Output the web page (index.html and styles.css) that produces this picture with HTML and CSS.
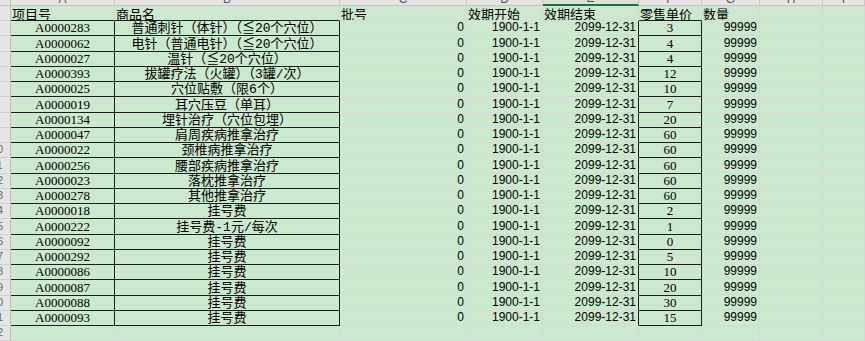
FILE: index.html
```html
<!DOCTYPE html>
<html lang="zh-CN">
<head>
<meta charset="utf-8">
<title>Sheet</title>
<link rel="stylesheet" href="styles.css">
</head>
<body>
<div class="sheet">
  <div class="row colhead">
    <div class="corner"></div><div><span>A</span></div><div><span>B</span></div><div><span>C</span></div><div><span>D</span></div><div class="sel"><span>E</span></div><div><span>F</span></div><div><span>G</span></div><div><span>H</span></div><div><span>I</span></div>
  </div>
  <div class="row hdr">
    <div class="rh"><span>1</span></div><div class="k-b">项目号</div><div class="k-b">商品名</div><div>批号</div><div>效期开始</div><div>效期结束</div><div class="k-b">零售单价</div><div>数量</div><div></div><div></div>
  </div>
  <div class="row"><div class="rh"><span>2</span></div><div class="code k-r k-b">A0000283</div><div class="zh k-r k-b">普通刺针（体针）（≦20个穴位）</div><div class="n">0</div><div class="n">1900-1-1</div><div class="n k-r">2099-12-31</div><div class="code k-r k-b">3</div><div class="n">99999</div><div></div><div></div></div>
  <div class="row"><div class="rh"><span>3</span></div><div class="code k-r k-b">A0000062</div><div class="zh k-r k-b">电针（普通电针）（≦20个穴位）</div><div class="n">0</div><div class="n">1900-1-1</div><div class="n k-r">2099-12-31</div><div class="code k-r k-b">4</div><div class="n">99999</div><div></div><div></div></div>
  <div class="row"><div class="rh"><span>4</span></div><div class="code k-r k-b">A0000027</div><div class="zh k-r k-b">温针（≦20个穴位）</div><div class="n">0</div><div class="n">1900-1-1</div><div class="n k-r">2099-12-31</div><div class="code k-r k-b">4</div><div class="n">99999</div><div></div><div></div></div>
  <div class="row"><div class="rh"><span>5</span></div><div class="code k-r k-b">A0000393</div><div class="zh k-r k-b">拔罐疗法（火罐）（3罐/次）</div><div class="n">0</div><div class="n">1900-1-1</div><div class="n k-r">2099-12-31</div><div class="code k-r k-b">12</div><div class="n">99999</div><div></div><div></div></div>
  <div class="row"><div class="rh"><span>6</span></div><div class="code k-r k-b">A0000025</div><div class="zh k-r k-b">穴位贴敷（限6个）</div><div class="n">0</div><div class="n">1900-1-1</div><div class="n k-r">2099-12-31</div><div class="code k-r k-b">10</div><div class="n">99999</div><div></div><div></div></div>
  <div class="row"><div class="rh"><span>7</span></div><div class="code k-r k-b">A0000019</div><div class="zh k-r k-b">耳穴压豆（单耳）</div><div class="n">0</div><div class="n">1900-1-1</div><div class="n k-r">2099-12-31</div><div class="code k-r k-b">7</div><div class="n">99999</div><div></div><div></div></div>
  <div class="row"><div class="rh"><span>8</span></div><div class="code k-r k-b">A0000134</div><div class="zh k-r k-b">埋针治疗（穴位包埋）</div><div class="n">0</div><div class="n">1900-1-1</div><div class="n k-r">2099-12-31</div><div class="code k-r k-b">20</div><div class="n">99999</div><div></div><div></div></div>
  <div class="row"><div class="rh"><span>9</span></div><div class="code k-r k-b">A0000047</div><div class="zh k-r k-b">肩周疾病推拿治疗</div><div class="n">0</div><div class="n">1900-1-1</div><div class="n k-r">2099-12-31</div><div class="code k-r k-b">60</div><div class="n">99999</div><div></div><div></div></div>
  <div class="row"><div class="rh"><span>10</span></div><div class="code k-r k-b">A0000022</div><div class="zh k-r k-b">颈椎病推拿治疗</div><div class="n">0</div><div class="n">1900-1-1</div><div class="n k-r">2099-12-31</div><div class="code k-r k-b">60</div><div class="n">99999</div><div></div><div></div></div>
  <div class="row"><div class="rh"><span>11</span></div><div class="code k-r k-b">A0000256</div><div class="zh k-r k-b">腰部疾病推拿治疗</div><div class="n">0</div><div class="n">1900-1-1</div><div class="n k-r">2099-12-31</div><div class="code k-r k-b">60</div><div class="n">99999</div><div></div><div></div></div>
  <div class="row"><div class="rh"><span>12</span></div><div class="code k-r k-b">A0000023</div><div class="zh k-r k-b">落枕推拿治疗</div><div class="n">0</div><div class="n">1900-1-1</div><div class="n k-r">2099-12-31</div><div class="code k-r k-b">60</div><div class="n">99999</div><div></div><div></div></div>
  <div class="row"><div class="rh"><span>13</span></div><div class="code k-r k-b">A0000278</div><div class="zh k-r k-b">其他推拿治疗</div><div class="n">0</div><div class="n">1900-1-1</div><div class="n k-r">2099-12-31</div><div class="code k-r k-b">60</div><div class="n">99999</div><div></div><div></div></div>
  <div class="row"><div class="rh"><span>14</span></div><div class="code k-r k-b">A0000018</div><div class="zh k-r k-b">挂号费</div><div class="n">0</div><div class="n">1900-1-1</div><div class="n k-r">2099-12-31</div><div class="code k-r k-b">2</div><div class="n">99999</div><div></div><div></div></div>
  <div class="row"><div class="rh"><span>15</span></div><div class="code k-r k-b">A0000222</div><div class="zh k-r k-b">挂号费-1元/每次</div><div class="n">0</div><div class="n">1900-1-1</div><div class="n k-r">2099-12-31</div><div class="code k-r k-b">1</div><div class="n">99999</div><div></div><div></div></div>
  <div class="row"><div class="rh"><span>16</span></div><div class="code k-r k-b">A0000092</div><div class="zh k-r k-b">挂号费</div><div class="n">0</div><div class="n">1900-1-1</div><div class="n k-r">2099-12-31</div><div class="code k-r k-b">0</div><div class="n">99999</div><div></div><div></div></div>
  <div class="row"><div class="rh"><span>17</span></div><div class="code k-r k-b">A0000292</div><div class="zh k-r k-b">挂号费</div><div class="n">0</div><div class="n">1900-1-1</div><div class="n k-r">2099-12-31</div><div class="code k-r k-b">5</div><div class="n">99999</div><div></div><div></div></div>
  <div class="row"><div class="rh"><span>18</span></div><div class="code k-r k-b">A0000086</div><div class="zh k-r k-b">挂号费</div><div class="n">0</div><div class="n">1900-1-1</div><div class="n k-r">2099-12-31</div><div class="code k-r k-b">10</div><div class="n">99999</div><div></div><div></div></div>
  <div class="row"><div class="rh"><span>19</span></div><div class="code k-r k-b">A0000087</div><div class="zh k-r k-b">挂号费</div><div class="n">0</div><div class="n">1900-1-1</div><div class="n k-r">2099-12-31</div><div class="code k-r k-b">20</div><div class="n">99999</div><div></div><div></div></div>
  <div class="row"><div class="rh"><span>20</span></div><div class="code k-r k-b">A0000088</div><div class="zh k-r k-b">挂号费</div><div class="n">0</div><div class="n">1900-1-1</div><div class="n k-r">2099-12-31</div><div class="code k-r k-b">30</div><div class="n">99999</div><div></div><div></div></div>
  <div class="row"><div class="rh"><span>21</span></div><div class="code k-r k-b">A0000093</div><div class="zh k-r k-b">挂号费</div><div class="n">0</div><div class="n">1900-1-1</div><div class="n k-r">2099-12-31</div><div class="code k-r k-b">15</div><div class="n">99999</div><div></div><div></div></div>
  <div class="row"><div class="rh"><span>22</span></div><div></div><div></div><div></div><div></div><div></div><div></div><div></div><div></div><div></div></div>
</div>
</body>
</html>
```
FILE: styles.css
```css
html, body {
  margin: 0;
  padding: 0;
}
body {
  background: #cce8cf;
  width: 865px;
  height: 341px;
  overflow: hidden;
  font-family: "Liberation Sans", "Noto Sans CJK SC", sans-serif;
  color: #000;
}
.sheet {
  display: flex;
  flex-direction: column;
}
.row {
  display: grid;
  grid-template-columns: 11px 104px 225px 127px 76px 96px 63px 58px 63px 1fr;
  height: 15.25px;
  flex-shrink: 0;
}
.row > div {
  box-sizing: border-box;
  border-right: 1px solid #d6d9d6;
  border-bottom: 1px solid #d6d9d6;
  display: flex;
  align-items: flex-end;
  overflow: hidden;
  white-space: nowrap;
  line-height: 13px;
  min-width: 0;
}
/* column letters band */
.colhead {
  height: 6px;
}
.colhead > div {
  background: #e4e4e4;
  border-right-color: #cacaca;
  border-bottom-color: #c4c4c4;
  justify-content: center;
  font-size: 12px;
  line-height: 12px;
  color: #5a5a5a;
}
.colhead > .sel {
  background: #d5e4d7;
  border-bottom: 2px solid #217346;
  color: #217346;
}
.colhead > .corner {
  border-right-color: #bdbdbd;
}
/* row numbers */
.row > .rh {
  background: #e4e4e4;
  border-right-color: #bdbdbd;
  border-bottom-color: #d0d0d0;
  justify-content: flex-end;
  font-size: 11px;
  color: #6a6a6a;
  padding-bottom: 1px;
}
.rh span {
  flex-shrink: 0;
  width: 26px;
  text-align: center;
}
/* header row */
.hdr {
  height: 15px;
}
.hdr > div {
  font-family: "Noto Sans CJK SC", sans-serif;
  font-size: 13px;
  padding-left: 1px;
}
/* cell types */
.code {
  justify-content: center;
  font-family: "Liberation Serif", "Noto Sans CJK SC", serif;
  font-size: 13px;
  padding-bottom: 1px;
}
.zh {
  justify-content: center;
  font-family: "Liberation Mono", "Noto Sans CJK SC", monospace;
  font-size: 13px;
}
.n {
  justify-content: flex-end;
  font-size: 12px;
  padding-right: 2px;
  padding-bottom: 1px;
}
.row > .k-r {
  border-right-color: #1e1e1e;
}
.row > .k-b {
  border-bottom-color: #1e1e1e;
}
```
